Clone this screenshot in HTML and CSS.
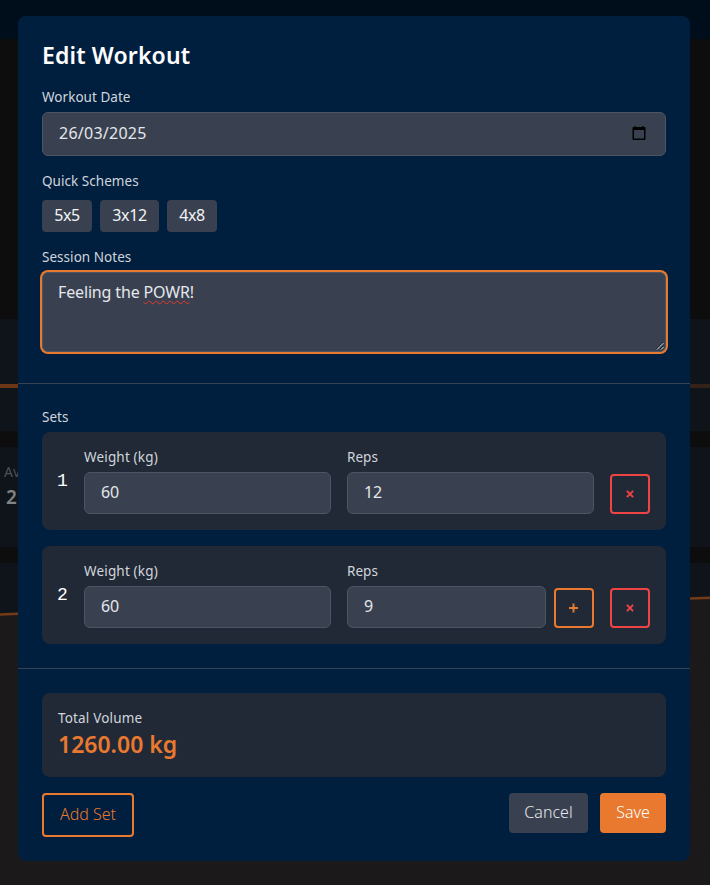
FILE: index.html
```
<!DOCTYPE html>
<html lang="en">
<head>
<meta charset="utf-8">
<title>Edit Workout</title>
<link rel="stylesheet" href="styles.css">
</head>
<body>
<div class="page" aria-hidden="true">
  <div class="nav"></div>
  <div class="spacer"></div>
  <div class="panel trend"><i></i><i class="dim"></i></div>
  <div class="panel stats"><div class="stat-label">Av</div><div class="stat-value">2</div></div>
  <div class="panel chart">
    <svg width="710" height="322" viewBox="0 0 710 322">
      <path class="area" d="M0 51 18 50.500 690 35.500 710 34.500V322H0Z"/>
      <path class="grid" d="M0 93.500H710M0 157.500H710M0 223.500H710M0 289.500H710"/>
      <path class="line" d="M0 51.500 18 50.800 690 35.500 710 34.800"/>
    </svg>
  </div>
</div>
<main class="modal">
  <section class="details">
    <h1>Edit Workout</h1>
    <div class="label">Workout Date</div>
    <div class="field date"><span>26/03/2025</span>
      <svg width="14" height="16" viewBox="0 0 14 16"><path fill-rule="evenodd" d="M2.500 1H4V2H10V1H11.500V2H12.500Q13.500 2 13.500 3V14Q13.500 15 12.500 15H1.500Q.5 15 .5 14V3Q.5 2 1.500 2H2.500ZM2 5V13.500H12V5Z"/></svg>
    </div>
    <div class="label schemes-label">Quick Schemes</div>
    <div class="schemes"><button class="chip">5x5</button><button class="chip wide">3x12</button><button class="chip">4x8</button></div>
    <div class="label notes-label">Session Notes</div>
    <div class="field notes"><span>Feeling the <span class="misspelt">POWR</span>!</span>
      <svg class="grip" width="8" height="8" viewBox="0 0 8 8"><path class="shade" d="M0 7 7 0M4 7 7 4"/><path d="M1 7.500 7.500 1M5 7.500 7.500 5"/></svg>
    </div>
  </section>
  <section class="sets">
    <div class="label">Sets</div>
    <div class="set">
      <div class="index">1</div>
      <div class="group"><div class="label weight">Weight (kg)</div><div class="field"><span>60</span></div></div>
      <div class="group"><div class="label">Reps</div><div class="field"><span>12</span></div></div>
      <button class="square remove" aria-label="Remove set"><svg width="8" height="8" viewBox="0 0 8 8"><path d="M.9.9 7.100 7.100M7.100.9.9 7.100"/></svg></button>
    </div>
    <div class="set">
      <div class="index">2</div>
      <div class="group"><div class="label weight">Weight (kg)</div><div class="field"><span>60</span></div></div>
      <div class="group"><div class="label">Reps</div><div class="with-add"><div class="field"><span>9</span></div><button class="square add" aria-label="Add rep"><svg width="10" height="10" viewBox="0 0 10 10"><path d="M4.500 .5V9.500M0 5H9"/></svg></button></div></div>
      <button class="square remove" aria-label="Remove set"><svg width="8" height="8" viewBox="0 0 8 8"><path d="M.9.9 7.100 7.100M7.100.9.9 7.100"/></svg></button>
    </div>
  </section>
  <section class="summary">
    <div class="total"><div class="label total-label">Total Volume</div><div class="volume">1260.00 kg</div></div>
    <div class="actions">
      <button class="add-set">Add Set</button>
      <button class="cancel">Cancel</button>
      <button class="save">Save</button>
    </div>
  </section>
</main>
</body>
</html>
```
FILE: styles.css
```
* { box-sizing: border-box; }
body { margin: 0; width: 710px; height: 885px; overflow: hidden; position: relative; background: #0d0d0d; font-family: "Noto Sans", sans-serif; color: #e5e7eb; font-size: 16px; }
svg { display: block; flex: none; }
button { border: 0; padding: 0; font: inherit; color: inherit; white-space: nowrap; }
.nav { height: 39px; background: #000d1a; }
.spacer { height: 280px; }
.panel { background: #0f141b; }
.trend { height: 112px; margin-bottom: 16px; padding-top: 65px; display: flex; justify-content: space-between; }
.trend i { width: 18px; height: 4px; background: #6b3716; }
.trend i.dim { width: 20px; background: #33211a; }
.stats { height: 100px; margin-bottom: 16px; padding: 14px 4px; color: #4e5154; font-size: 14px; line-height: 22px; }
.stat-value { margin: 1px 0 0 2px; color: #828384; font-size: 19px; font-weight: 600; line-height: 26px; }
.chart { height: 322px; }
.area { fill: #1c191b; }
.grid { stroke: #191719; fill: none; }
.line { stroke: #743b16; stroke-width: 2.500; fill: none; }

.modal { position: absolute; left: 18px; top: 16px; width: 672px; height: 845px; background: #001f3f; border-radius: 8px; }
section { padding: 24px; }
.details { height: 367px; }
h1 { margin: 0 0 16px; color: #fff; font-size: 23px; font-weight: 600; letter-spacing: .15px; line-height: 30px; height: 32px; }
.label { font-size: 13.500px; letter-spacing: .04px; line-height: 18px; height: 20px; margin-bottom: 4px; color: #d1d5db; white-space: nowrap; }
.weight { letter-spacing: .17px; }
.total-label { letter-spacing: .17px; }
.field { display: flex; align-items: center; height: 42px; padding: 0 16px 2px; background: #394150; border: 1px solid #4b5563; border-radius: 6px; letter-spacing: -.15px; }
.date { height: 44px; justify-content: space-between; padding-right: 19px; letter-spacing: .25px; }
.schemes-label { margin: 16px 0 8px; }
.schemes { display: flex; gap: 8px; }
.chip { width: 50px; height: 32px; padding-bottom: 2px; background: #394150; border-radius: 4px; text-align: center; color: #f3f4f6; letter-spacing: -.4px; }
.chip.wide { width: 59px; }
.notes-label { margin-top: 16px; }
.notes { position: relative; height: 80px; align-items: flex-start; padding: 8px 15px; line-height: 22px; box-shadow: 0 0 0 2px #e8792e; }
.misspelt { text-decoration: underline wavy #e03a2b 1px; text-decoration-skip-ink: none; text-underline-offset: 2px; }
.grip { position: absolute; right: 1px; bottom: 1px; fill: none; stroke: #d1d5db; stroke-width: 1; }
.grip .shade { stroke: #20242c; }

.sets { height: 285px; border-top: 1px solid #374151; }
.set { display: flex; gap: 16px; height: 98px; padding: 16px; margin-bottom: 16px; background: #212936; border-radius: 8px; }
.index { width: 10px; margin: 0 1px 0 -1px; font: 18px/28px "Liberation Mono", monospace; align-self: center; color: #fff; }
.group { width: 247px; }
.with-add { display: flex; gap: 8px; align-items: flex-end; }
.with-add .field { flex: 1; }
.square { width: 40px; height: 40px; display: flex; align-items: center; justify-content: center; background: none; border: 2px solid #ef4444; border-radius: 4px; align-self: flex-end; }
.square path { fill: none; stroke: #ef4444; stroke-width: 2; }
.square.add { border-color: #e8792e; }
.square.add path { stroke: #e8792e; }
.summary { border-top: 1px solid #374151; }
.total { height: 84px; padding: 16px; margin-bottom: 16px; background: #212936; border-radius: 8px; }
.total .label { margin: 0; }
.volume { color: #e8792e; font-size: 23px; font-weight: 600; line-height: 30px; }
.actions { display: flex; align-items: flex-start; font-weight: 300; }
.add-set { width: 92px; height: 44px; padding-bottom: 2px; border: 2px solid #e8792e; border-radius: 4px; background: none; color: #e8792e; }
.cancel, .save { height: 40px; padding-bottom: 2px; border-radius: 4px; }
.cancel { width: 79px; margin-left: auto; background: #394150; color: #e5e7eb; }
.save { width: 66px; margin-left: 12px; background: #e8792e; color: #fff; }
```
